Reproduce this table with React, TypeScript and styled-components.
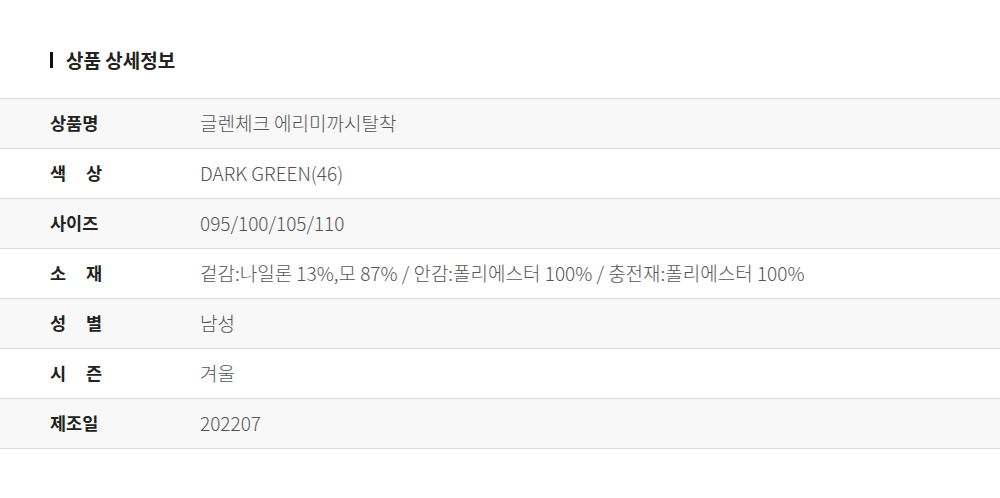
import styled, { createGlobalStyle } from 'styled-components';

const GlobalStyle = createGlobalStyle`
  html, body {
    margin: 0;
    padding: 0;
    background: #ffffff;
  }
  body {
    font-family: 'Noto Sans CJK KR', 'Noto Sans', sans-serif;
  }
`;

const rows = [
  { label: '상품명', value: '글렌체크 에리미까시탈착' },
  { label: '색 상', value: 'DARK GREEN(46)' },
  { label: '사이즈', value: '095/100/105/110' },
  { label: '소 재', value: '겉감:나일론 13%,모 87% / 안감:폴리에스터 100% / 충전재:폴리에스터 100%' },
  { label: '성 별', value: '남성' },
  { label: '시 즌', value: '겨울' },
  { label: '제조일', value: '202207' },
];

const App = () => {
  return (
    <>
      <GlobalStyle />
      <Wrapper>
        <Title>상품 상세정보</Title>
        <Table>
          {rows.map((row, i) => (
            <Row key={row.label} $shaded={i % 2 === 0}>
              <Label>{row.label}</Label>
              <Value>{row.value}</Value>
            </Row>
          ))}
        </Table>
      </Wrapper>
    </>
  );
};

export default App;

const Wrapper = styled.div`
  width: 1000px;
  height: 498px;
  padding-top: 47px;
  box-sizing: border-box;
`;

// 제목 앞 세로 막대
const Title = styled.h2`
  position: relative;
  margin: 0 0 0 50px;
  padding-left: 16px;
  height: 26px;
  line-height: 26px;
  font-size: 19px;
  font-weight: 700;
  color: #222;
  &::before {
    content: '';
    position: absolute;
    left: 0;
    top: 5px;
    width: 3px;
    height: 16px;
    background: #111;
  }
`;

const Table = styled.div`
  margin-top: 25px;
  border-top: 1px solid #dddddd;
`;

const Row = styled.div<{ $shaded: boolean }>`
  display: flex;
  align-items: center;
  height: 50px;
  box-sizing: border-box;
  padding: 0 0 3px 50px;
  border-bottom: 1px solid #dddddd;
  background: ${(p) => (p.$shaded ? '#f8f8f8' : '#ffffff')};
`;

const Label = styled.span`
  width: 52px;
  margin-right: 98px;
  font-size: 17.5px;
  font-weight: 700;
  color: #222;
  text-align: justify;
  text-align-last: justify;
  white-space: nowrap;
`;

const Value = styled.span`
  font-size: 19px;
  font-weight: 300;
  color: #555;
  white-space: nowrap;
`;
